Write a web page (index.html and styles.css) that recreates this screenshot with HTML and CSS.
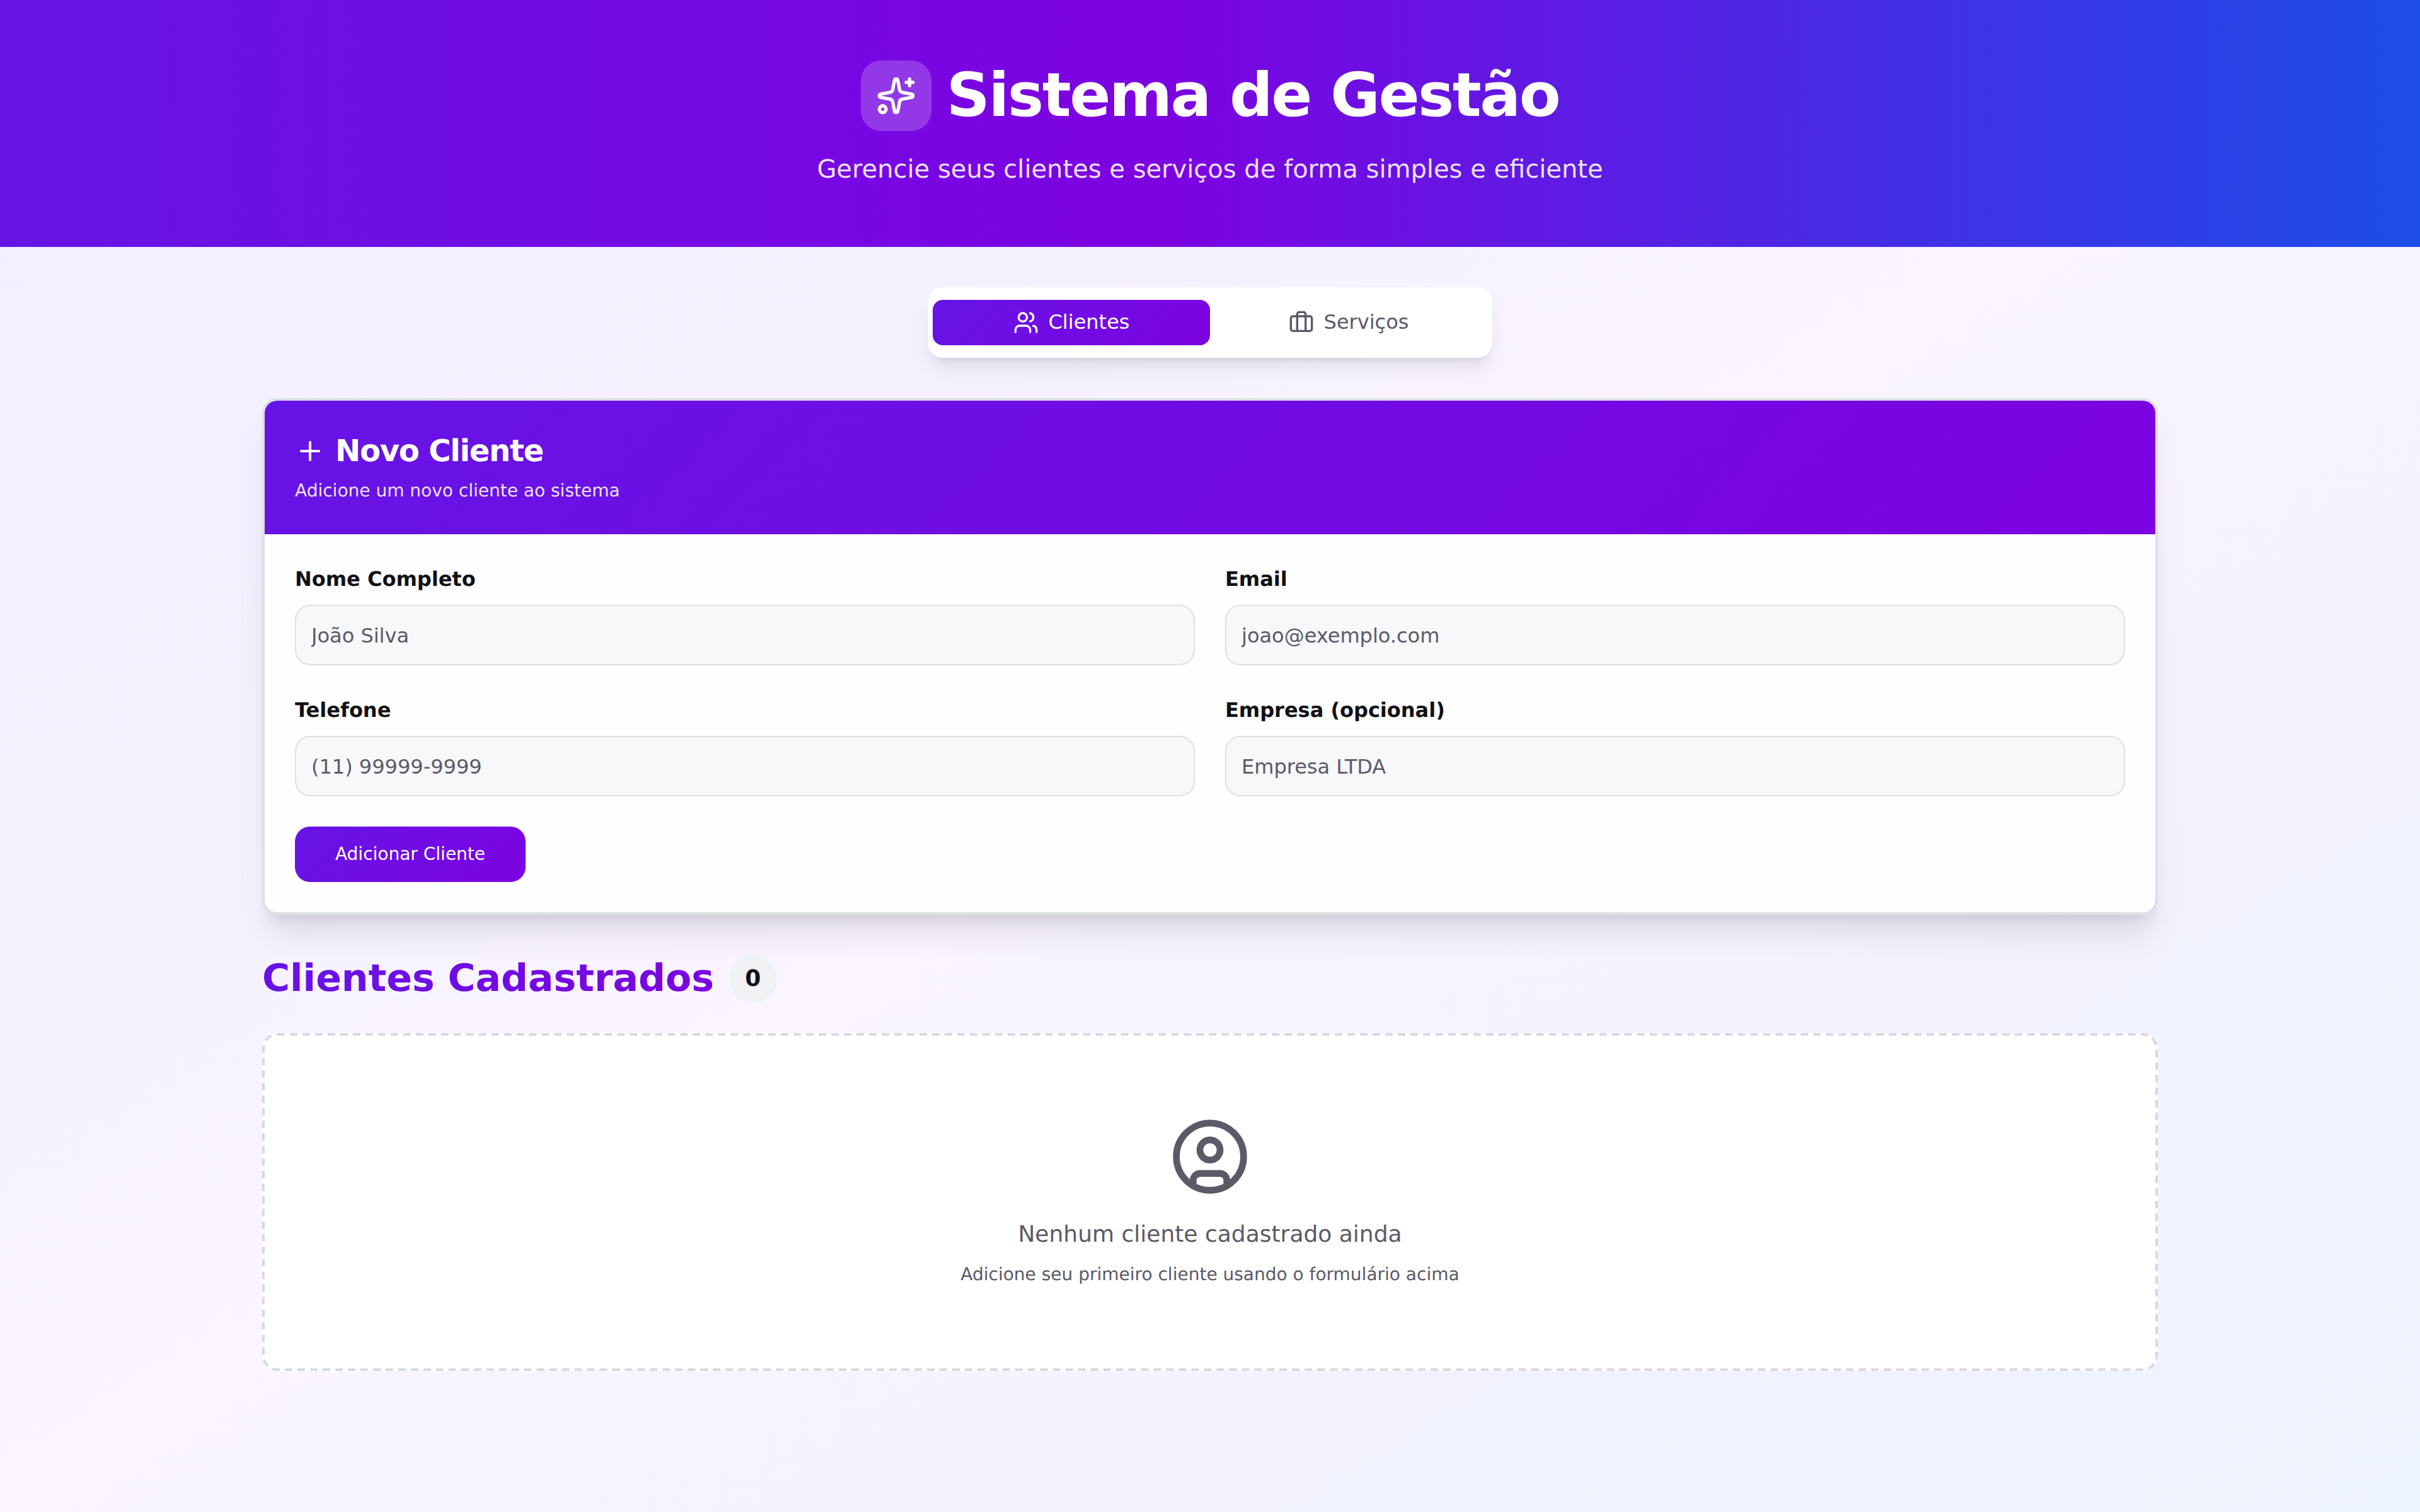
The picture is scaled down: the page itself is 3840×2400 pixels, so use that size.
FILE: index.html
```html
<!DOCTYPE html>
<html lang="pt-BR">
<head>
<meta charset="utf-8">
<title>Sistema de Gestão</title>
<link rel="stylesheet" href="styles.css">
</head>
<body>
<header class="hero">
  <div class="hero-title">
    <span class="hero-icon">
      <svg class="ic ic-64" viewBox="0 0 24 24"><path d="M11.017 2.814a1 1 0 0 1 1.966 0l1.051 5.558a2 2 0 0 0 1.594 1.594l5.558 1.051a1 1 0 0 1 0 1.966l-5.558 1.051a2 2 0 0 0-1.594 1.594l-1.051 5.558a1 1 0 0 1-1.966 0l-1.051-5.558a2 2 0 0 0-1.594-1.594l-5.558-1.051a1 1 0 0 1 0-1.966l5.558-1.051a2 2 0 0 0 1.594-1.594z"/><path d="M20 2v4"/><path d="M22 4h-4"/><circle cx="4" cy="20" r="2"/></svg>
    </span>
    <h1>Sistema de Gestão</h1>
  </div>
  <p class="hero-sub">Gerencie seus clientes e serviços de forma simples e eficiente</p>
</header>
<main class="main">
  <nav class="tabs">
    <button class="tab tab-active">
      <svg class="ic ic-40" viewBox="0 0 24 24"><path d="M16 21v-2a4 4 0 0 0-4-4H6a4 4 0 0 0-4 4v2"/><path d="M16 3.128a4 4 0 0 1 0 7.744"/><path d="M22 21v-2a4 4 0 0 0-3-3.87"/><circle cx="9" cy="7" r="4"/></svg>
      <span>Clientes</span>
    </button>
    <button class="tab">
      <svg class="ic ic-40" viewBox="0 0 24 24"><path d="M16 20V4a2 2 0 0 0-2-2h-4a2 2 0 0 0-2 2v16"/><rect width="20" height="14" x="2" y="6" rx="2"/></svg>
      <span>Serviços</span>
    </button>
  </nav>
  <section class="card">
    <div class="card-head">
      <h2><svg class="ic ic-48" viewBox="0 0 24 24"><path d="M5 12h14"/><path d="M12 5v14"/></svg>Novo Cliente</h2>
      <p>Adicione um novo cliente ao sistema</p>
    </div>
    <form class="card-body">
      <div class="fields">
        <label class="field"><span>Nome Completo</span><input type="text" placeholder="João Silva"></label>
        <label class="field"><span>Email</span><input type="text" placeholder="joao@exemplo.com"></label>
        <label class="field"><span>Telefone</span><input type="text" placeholder="(11) 99999-9999"></label>
        <label class="field"><span>Empresa (opcional)</span><input type="text" placeholder="Empresa LTDA"></label>
      </div>
      <button type="button" class="submit">Adicionar Cliente</button>
    </form>
  </section>
  <div class="list-head">
    <h3>Clientes Cadastrados</h3>
    <span class="count">0</span>
  </div>
  <section class="empty">
    <svg class="ic ic-128" viewBox="0 0 24 24"><circle cx="12" cy="12" r="10"/><circle cx="12" cy="10" r="3"/><path d="M7 20.662V19a2 2 0 0 1 2-2h6a2 2 0 0 1 2 2v1.662"/></svg>
    <p class="empty-title">Nenhum cliente cadastrado ainda</p>
    <p class="empty-sub">Adicione seu primeiro cliente usando o formulário acima</p>
  </section>
</main>
</body>
</html>
```
FILE: styles.css
```css
*, *::before { box-sizing: border-box; }
html, body { margin: 0; padding: 0; }
body {
  width: 3840px;
  min-height: 2400px;
  font-family: "DejaVu Sans", sans-serif;
  text-rendering: geometricPrecision;
  background: linear-gradient(to bottom right, #f3efff 0%, #f5f1ff 33%, #faf5ff 50%, #f1f2ff 78%, #eef4ff 100%);
  color: #111114;
}
.ic { fill: none; stroke: currentColor; stroke-width: 2; stroke-linecap: round; stroke-linejoin: round; flex: none; display: block; }
.ic-40 { width: 40px; height: 40px; }
.ic-48 { width: 48px; height: 48px; }
.ic-64 { width: 64px; height: 64px; }
.ic-128 { width: 128px; height: 128px; }

.hero {
  height: 392px;
  padding-top: 96px;
  background: linear-gradient(90deg, #6614e6 0%, #7d03e1 48%, #1c4de8 100%);
  color: #fff;
  text-align: center;
}
.hero-title { display: flex; justify-content: center; align-items: center; gap: 24px; }
.hero-icon {
  width: 112px; height: 112px; padding: 24px;
  border-radius: 32px;
  background: rgba(255,255,255,.2);
}
.hero h1 { margin: 0 0 2px; font-size: 96px; line-height: 110px; font-weight: 700; letter-spacing: -2.4px; }
.hero-sub { margin: 33px 0 0; font-size: 40px; line-height: 56px; color: rgba(255,255,255,.9); }

.main { width: 3008px; margin: 0 auto; padding-top: 64px; }

.tabs {
  width: 896px; height: 112px;
  margin: 0 auto 64px;
  padding: 20px 8px;
  display: grid; grid-template-columns: 1fr 1fr;
  background: #fff;
  border-radius: 24px;
  box-shadow: 0 20px 30px -6px rgba(0,0,0,.1), 0 8px 12px -8px rgba(0,0,0,.1);
}
.tab {
  display: flex; align-items: center; justify-content: center; gap: 16px;
  border: 0; background: none; padding: 0;
  border-radius: 16px;
  font: 400 32px "DejaVu Sans", sans-serif;
  color: #5b5a66;
}
.tab span { padding-bottom: 2px; }
.tab-active {
  background: linear-gradient(135deg, #6614e6, #7d03e1);
  color: #fff;
  box-shadow: 0 2px 4px rgba(0,0,0,.05);
}

.card {
  height: 820px;
  background: #fefdff;
  border: 4px solid #dfdfe4;
  border-radius: 24px;
  overflow: hidden;
  box-shadow: 0 40px 50px -10px rgba(0,0,0,.1), 0 16px 20px -12px rgba(0,0,0,.1);
}
.card-head {
  height: 212px;
  padding: 48px 48px 0;
  background: linear-gradient(135deg, #6614e6, #7d03e1);
  color: #fff;
}
.card-head h2 { margin: 0; display: flex; align-items: center; gap: 16px; font-size: 48px; line-height: 64px; font-weight: 700; letter-spacing: -1.2px; }
.card-head p { margin: 11px 0 0; font-size: 28px; line-height: 40px; color: rgba(255,255,255,.9); }
.card-body { padding: 48px; }
.fields { display: grid; grid-template-columns: 1fr 1fr; gap: 48px; }
.field { display: flex; flex-direction: column; gap: 18px; }
.field span { font-size: 32px; line-height: 46px; font-weight: 700; }
.field input {
  height: 96px; padding: 2px 24px 0;
  background: #f7f8fa;
  border: 2px solid #dfdfe4;
  border-radius: 24px;
  font: 400 32px "DejaVu Sans", sans-serif;
  outline: none;
}
.field input::placeholder { color: #5b5a66; opacity: 1; }
.submit {
  display: block; margin-top: 48px;
  width: 366px; height: 88px;
  padding: 0 0 2px;
  border: 0; border-radius: 24px;
  background: linear-gradient(135deg, #6614e6, #7d03e1);
  color: #fff;
  font: 400 28px "DejaVu Sans", sans-serif;
}

.list-head { margin-top: 64px; height: 76px; display: flex; align-items: center; gap: 24px; }
.list-head h3 {
  margin: 0 0 3px; font-size: 60px; line-height: 72px; font-weight: 700;
  background: linear-gradient(135deg, #6614e6, #7d03e1);
  -webkit-background-clip: text; background-clip: text;
  color: transparent;
}
.count {
  width: 76px; height: 76px; border-radius: 50%;
  padding-bottom: 2px;
  display: flex; align-items: center; justify-content: center;
  background: #f1f2f4;
  font-size: 36px; font-weight: 700;
}
.empty {
  position: relative;
  margin-top: 48px; height: 536px;
  padding-top: 132px;
  display: flex; flex-direction: column; align-items: center;
  background: #fff;
  border-radius: 24px;
  color: #5b5a66;
}
/* drawn at half size and doubled: gives the reference's 12px dash and 8px gap */
.empty::before {
  content: "";
  position: absolute; left: 0; top: 0;
  width: 50%; height: 50%;
  border: 2px dashed #d9d8e0;
  border-radius: 12px;
  transform: scale(2);
  transform-origin: 0 0;
}
.empty-title { margin: 32px 0 0; font-size: 36px; line-height: 56px; }
.empty-sub { margin: 15px 0 0; font-size: 28px; line-height: 40px; }
```
